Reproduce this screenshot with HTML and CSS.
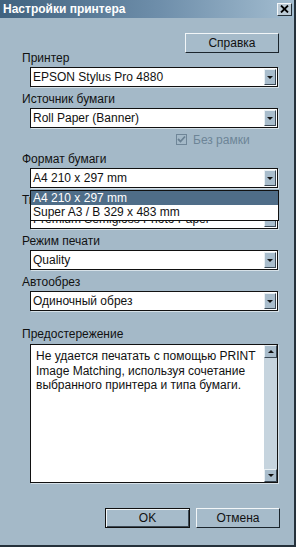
FILE: index.html
```html
<!DOCTYPE html>
<html lang="ru">
<head>
    <meta charset="UTF-8">
    <meta name="viewport" content="width=device-width, initial-scale=1.0">
    <title>Настройки принтера</title>
    <link rel="stylesheet" href="styles.css">
</head>
<body>
    <div class="window">
        <div class="titlebar">
            <span class="title">Настройки принтера</span>
            <span class="close-btn" aria-label="Закрыть">
                <svg width="9" height="8" viewBox="0 0 9 8">
                    <path d="M1 0.5 L8 7.5 M8 0.5 L1 7.5" stroke="#000" stroke-width="1.8"/>
                </svg>
            </span>
        </div>

        <div class="content">
            <div class="help-row">
                <button class="btn help">Справка</button>
            </div>

            <div class="label first">Принтер</div>
            <div class="combo">
                <span class="value">EPSON Stylus Pro 4880</span>
                <span class="arrow"></span>
            </div>

            <div class="label">Источник бумаги</div>
            <div class="combo">
                <span class="value">Roll Paper (Banner)</span>
                <span class="arrow"></span>
            </div>

            <div class="check-row">
                <span class="checkbox">
                    <svg width="9" height="9" viewBox="0 0 9 9">
                        <path d="M1 4 L3.5 6.5 L8 1.5" fill="none" stroke="#6a8193" stroke-width="1.8"/>
                    </svg>
                </span>
                <span>Без рамки</span>
            </div>

            <div class="label after-check">Формат бумаги</div>
            <div class="combo">
                <span class="value">A4 210 x 297 mm</span>
                <span class="arrow"></span>
                <div class="list">
                    <div class="item selected">A4 210 x 297 mm</div>
                    <div class="item">Super A3 / B 329 x 483 mm</div>
                </div>
            </div>

            <div class="label">Тип бумаги</div>
            <div class="combo">
                <span class="value">Premium Semigloss Photo Paper</span>
                <span class="arrow"></span>
            </div>

            <div class="label">Режим печати</div>
            <div class="combo">
                <span class="value">Quality</span>
                <span class="arrow"></span>
            </div>

            <div class="label">Автообрез</div>
            <div class="combo">
                <span class="value">Одиночный обрез</span>
                <span class="arrow"></span>
            </div>

            <div class="label warning">Предостережение</div>
            <div class="memo">
                <div class="memo-text">Не удается печатать с помощью PRINT Image Matching, используя сочетание выбранного принтера и типа бумаги.</div>
                <div class="scrollbar">
                    <span class="sb-btn up"></span>
                    <span class="sb-btn down"></span>
                </div>
            </div>

            <div class="actions">
                <button class="btn ok">OK</button>
                <button class="btn cancel">Отмена</button>
            </div>
        </div>
    </div>
</body>
</html>
```

FILE: styles.css
```css
body {
    margin: 0;
    font-family: "Liberation Sans", Arial, sans-serif;
    font-size: 12px;
    color: #111;
}
.window {
    width: 296px;
    height: 547px;
    box-sizing: border-box;
    background-color: #a4b9c8;
    border-right: 2px solid #25313b;
    border-bottom: 2px solid #25313b;
    display: flex;
    flex-direction: column;
}
.titlebar {
    height: 18px;
    flex: none;
    display: flex;
    align-items: center;
    justify-content: space-between;
    padding: 0 2px 0 3px;
    background: linear-gradient(to right, #40627f 0%, #6f8fab 55%, #a3bdd0 100%);
}
.title {
    color: white;
    font-weight: bold;
    font-size: 12px;
}
.close-btn {
    width: 15px;
    height: 13px;
    box-sizing: border-box;
    background-color: #bccbd6;
    border: 1px solid;
    border-color: #f4f7f9 #26313a #26313a #f4f7f9;
    display: flex;
    align-items: center;
    justify-content: center;
}
.content {
    flex: 1;
    padding: 0 16px 0 22px;
    display: flex;
    flex-direction: column;
}
.help-row {
    display: flex;
    justify-content: flex-end;
    margin-top: 15px;
}
.btn {
    height: 20px;
    box-sizing: border-box;
    padding: 0;
    font-family: inherit;
    font-size: 12px;
    color: #111;
    background-color: #a6bbca;
    border: 1px solid;
    border-color: #f2f6f8 #1b252d #1b252d #f2f6f8;
}
.help {
    width: 94px;
    margin-right: -1px;
}
.label {
    line-height: 14px;
    margin-top: 5px;
}
.label.first {
    margin-top: -2px;
}
.label.after-check {
    margin-top: 3px;
}
.label.warning {
    margin-top: 16px;
}
.combo {
    position: relative;
    margin: 2px 0 0 8px;
    height: 20px;
    box-sizing: border-box;
    background-color: white;
    border: 1px solid #111;
    box-shadow: 1px 1px 0 #d6e1e8;
    display: flex;
    align-items: center;
}
.combo .value {
    flex: 1;
    padding-left: 2px;
    white-space: nowrap;
    overflow: hidden;
}
.combo .arrow {
    width: 12px;
    height: 16px;
    margin-right: 1px;
    box-sizing: border-box;
    background-color: #a9bdcc;
    border: 1px solid;
    border-color: #e8eff3 #3b4955 #3b4955 #e8eff3;
    display: flex;
    align-items: center;
    justify-content: center;
}
.combo .arrow::after {
    content: "";
    border-left: 3px solid transparent;
    border-right: 3px solid transparent;
    border-top: 3px solid #111;
}
.list {
    position: absolute;
    top: 21px;
    left: -1px;
    right: -2px;
    z-index: 2;
    background-color: white;
    border: 1px solid #111;
}
.list .item {
    height: 14px;
    line-height: 14px;
    padding-left: 2px;
    white-space: nowrap;
}
.list .item + .item {
    height: 15px;
}
.list .selected {
    background-color: #4f6d88;
    color: white;
}
.check-row {
    height: 19px;
    margin-top: 2px;
    padding-left: 154px;
    display: flex;
    align-items: center;
    gap: 6px;
    color: #6d8597;
}
.checkbox {
    width: 11px;
    height: 11px;
    box-sizing: border-box;
    border: 1px solid #6f8698;
    display: flex;
    align-items: center;
    justify-content: center;
}
.memo {
    margin: 3px 0 0 8px;
    height: 139px;
    box-sizing: border-box;
    background-color: white;
    border: 1px solid #111;
    box-shadow: 1px 1px 0 #d6e1e8;
    display: flex;
}
.memo-text {
    flex: 1;
    padding: 4px 4px 0 5px;
    line-height: 14.5px;
}
.scrollbar {
    width: 13px;
    background-color: #c6d4de;
    display: flex;
    flex-direction: column;
    justify-content: space-between;
}
.sb-btn {
    width: 13px;
    height: 13px;
    box-sizing: border-box;
    background-color: #a9bdcc;
    border: 1px solid;
    border-color: #e8eff3 #3b4955 #3b4955 #e8eff3;
    display: flex;
    align-items: center;
    justify-content: center;
}
.sb-btn.up::after {
    content: "";
    border-left: 3px solid transparent;
    border-right: 3px solid transparent;
    border-bottom: 3px solid #111;
}
.sb-btn.down::after {
    content: "";
    border-left: 3px solid transparent;
    border-right: 3px solid transparent;
    border-top: 3px solid #111;
}
.actions {
    display: flex;
    justify-content: flex-end;
    gap: 6px;
    margin: 25px -2px 0 0;
}
.ok {
    width: 85px;
    border-color: #111;
    box-shadow: inset 1px 1px 0 #f2f6f8, inset -1px -1px 0 #3b4955;
}
.cancel {
    width: 84px;
}
```
